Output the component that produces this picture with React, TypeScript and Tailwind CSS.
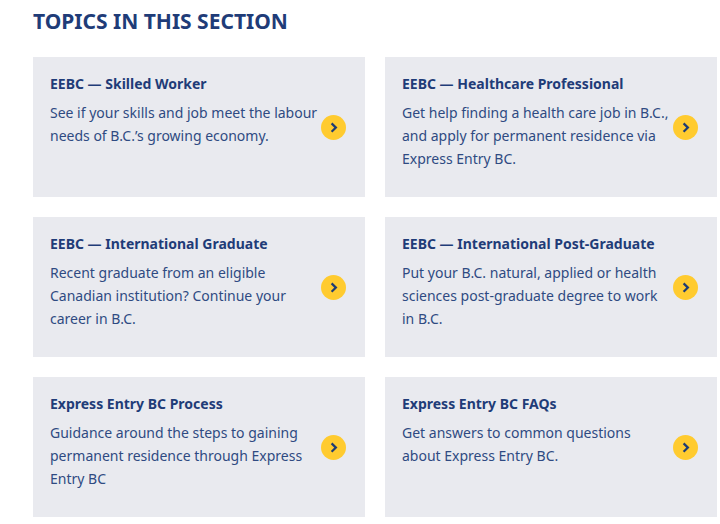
import React from 'react';

const topics = [
  {
    title: 'EEBC — Skilled Worker',
    text: 'See if your skills and job meet the labour needs of B.C.’s growing economy.',
  },
  {
    title: 'EEBC — Healthcare Professional',
    text: 'Get help finding a health care job in B.C., and apply for permanent residence via Express Entry BC.',
  },
  {
    title: 'EEBC — International Graduate',
    text: 'Recent graduate from an eligible Canadian institution? Continue your career in B.C.',
  },
  {
    title: 'EEBC — International Post-Graduate',
    text: 'Put your B.C. natural, applied or health sciences post-graduate degree to work in B.C.',
  },
  {
    title: 'Express Entry BC Process',
    text: 'Guidance around the steps to gaining permanent residence through Express Entry BC',
  },
  {
    title: 'Express Entry BC FAQs',
    text: 'Get answers to common questions about Express Entry BC.',
  },
];

const ArrowIcon = () => (
  <svg width="25" height="25" viewBox="0 0 25 25" className="shrink-0" aria-hidden="true">
    <circle cx="12.5" cy="12.5" r="12.5" fill="#ffcb2f" />
    <path d="M10.6 8.4 L14.9 12.6 L10.6 16.8" fill="none" stroke="#1f3c72" strokeWidth="2.2" />
  </svg>
);

const App = () => {
  return (
    <main className="bg-white pl-[33px] pr-[3px] pt-[7px] pb-1.5 font-['Noto_Sans','Open_Sans',sans-serif] text-[#1f3c78]">
      <h2 className="text-[21px] leading-7 font-bold uppercase">Topics in this section</h2>

      <div className="mt-[22px] grid grid-cols-2 auto-rows-fr gap-5">
        {topics.map((topic) => (
          <a
            key={topic.title}
            href="#"
            className="flex items-center gap-0.5 bg-[#e9eaef] pl-[17px] pr-[19px]"
          >
            <div className="flex-1 self-stretch pt-[15px] pb-[27px]">
              <h3 className="text-[14px] leading-[23px] font-bold">{topic.title}</h3>
              <p className="mt-1.5 text-[14px] leading-[23px] text-[#2f4a82]">{topic.text}</p>
            </div>
            <ArrowIcon />
          </a>
        ))}
      </div>
    </main>
  );
};

export default App;
